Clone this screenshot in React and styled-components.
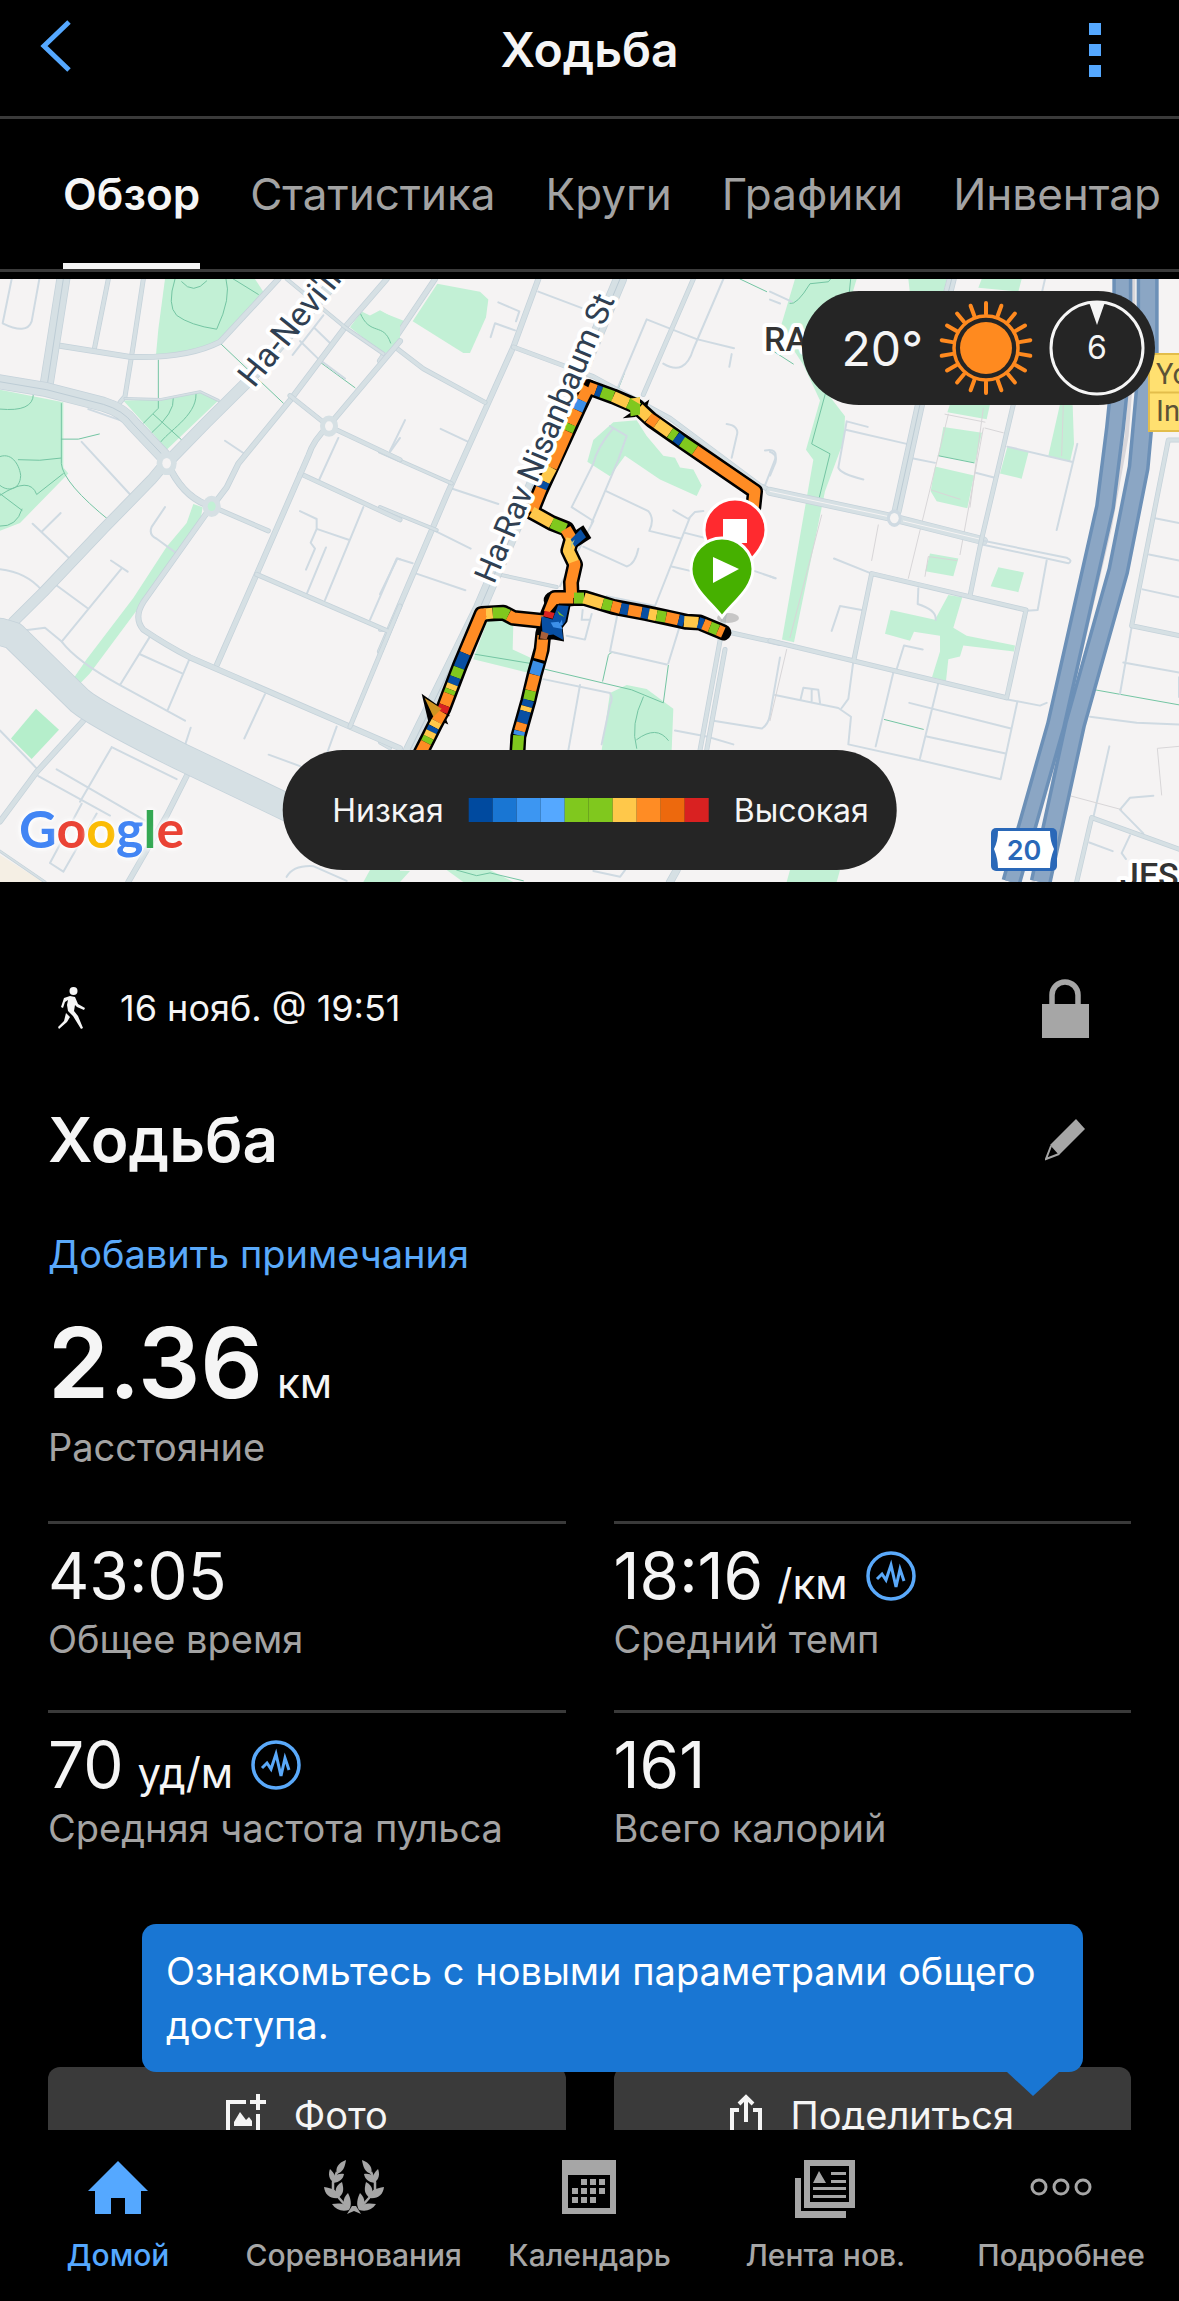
import React from "react";
import styled, { createGlobalStyle } from "styled-components";

const GlobalStyle = createGlobalStyle`
  * {
    box-sizing: border-box;
  }
  body {
    margin: 0;
    background: #000;
    color: #f5f5f5;
    font-family: Inter, "Liberation Sans", sans-serif;
  }
  button {
    font-family: inherit;
    background: none;
    border: none;
    padding: 0;
    color: inherit;
  }
  a {
    text-decoration: none;
  }
  h1, h2, p, dl, dd, dt {
    margin: 0;
  }
`;

const Screen = styled.div`
  display: flex;
  flex-direction: column;
  height: 100vh;
  overflow: hidden;
`;

const Header = styled.header`
  display: grid;
  grid-template-columns: 1fr auto 1fr;
  flex-shrink: 0;
  padding: 20px 40px 36px;
  border-bottom: 3px solid #3a3a3a;
  h1 {
    font-size: 48px;
    font-weight: 600;
    line-height: 60px;
  }
`;

const HeaderButton = styled.button`
  justify-self: ${props => props.$side};
  height: 60px;
  svg {
    display: block;
  }
`;

const Tabs = styled.nav`
  display: flex;
  flex-shrink: 0;
  gap: 50px;
  padding: 0 63px;
  margin-bottom: 7px;
  border-bottom: 3px solid #3a3a3a;
  overflow: hidden;
`;

const Tab = styled.a`
  padding: 45px 0 39px;
  line-height: 60px;
  font-size: 44px;
  white-space: nowrap;
  font-weight: ${props => (props.$active ? 600 : 400)};
  color: ${props => (props.$active ? "#f5f5f5" : "#a3a3a3")};
  border-bottom: 6px solid ${props => (props.$active ? "#f5f5f5" : "transparent")};
`;

const MapPanel = styled.section`
  position: relative;
  flex-shrink: 0;
  height: 603px;
  background: #f5f3f3;
  overflow: hidden;
  > svg {
    display: block;
    width: 100%;
    height: 100%;
  }
`;

const Weather = styled.div`
  position: absolute;
  top: 12px;
  right: 24px;
  display: flex;
  align-items: center;
  gap: 16px;
  height: 114px;
  padding: 0 10px 0 40px;
  border-radius: 57px;
  background: #252525;
  font-size: 48px;
  svg {
    display: block;
  }
`;

const Legend = styled.div`
  position: absolute;
  left: 50%;
  bottom: 12px;
  transform: translateX(-50%);
  display: flex;
  align-items: center;
  gap: 25px;
  height: 120px;
  padding: 0 28px 0 50px;
  border-radius: 60px;
  background: #252525;
  font-size: 32px;
`;

const Scale = styled.div`
  display: flex;
`;

const Swatch = styled.span`
  width: 24px;
  height: 24px;
  background: ${props => props.$color};
`;

const Google = styled.div`
  position: absolute;
  left: 19px;
  bottom: 24px;
  font-family: Lato, sans-serif;
  font-size: 52px;
  font-weight: 700;
  line-height: 60px;
  text-shadow: 0 0 5px #fff, 0 0 5px #fff, 0 0 8px #fff;
`;

const Letter = styled.span`
  color: ${props => props.$color};
`;

const Content = styled.main`
  flex: 1;
  min-height: 0;
  overflow: hidden;
  padding: 96px 48px 0;
`;

const Row = styled.div`
  display: flex;
  align-items: center;
  justify-content: space-between;
  padding-right: 42px;
  h2 {
    font-size: 62px;
    font-weight: 600;
    line-height: 80px;
  }
  & + & {
    margin-top: 62px;
  }
  svg {
    display: block;
  }
`;

const Meta = styled.div`
  display: flex;
  align-items: center;
  gap: 34px;
  padding-left: 10px;
  height: 60px;
  font-size: 36px;
`;

const NotesLink = styled.a`
  display: block;
  margin-top: 49px;
  font-size: 38px;
  line-height: 50px;
  color: #5aa9fa;
`;

const Distance = styled.dl`
  margin-top: 34px;
  dd {
    font-size: 98px;
    font-weight: 600;
    line-height: 100px;
  }
  dt {
    margin-top: 9px;
  }
`;

const Label = styled.dt`
  font-size: 38px;
  line-height: 50px;
  color: #a3a3a3;
`;

const Unit = styled.span`
  margin-left: 14px;
  font-size: 42px;
  font-weight: 400;
  line-height: 40px;
`;

const Stats = styled.dl`
  display: grid;
  grid-template-columns: 1fr 1fr;
  column-gap: 48px;
  margin-top: 49px;
`;

const Stat = styled.div`
  display: flex;
  flex-direction: column-reverse;
  gap: 3px;
  padding: 17px 0 46px;
  border-top: 3px solid #3a3a3a;
  dd {
    display: flex;
    align-items: center;
    font-size: 64px;
    line-height: 70px;
  }
  svg {
    margin-left: 18px;
  }
`;

const Actions = styled.div`
  position: relative;
  display: grid;
  grid-template-columns: 1fr 1fr;
  gap: 48px;
  margin-top: 168px;
`;

const ActionButton = styled.button`
  display: flex;
  align-items: center;
  justify-content: center;
  gap: 28px;
  height: 96px;
  border-radius: 12px;
  background: #3a3a3a;
  font-size: 38px;
`;

const Tooltip = styled.div`
  position: absolute;
  left: 94px;
  right: 48px;
  bottom: calc(100% - 5px);
  padding: 20px 24px;
  border-radius: 14px;
  background: #1976d3;
  color: #fff;
  font-size: 38px;
  line-height: 54px;
  &::after {
    content: "";
    position: absolute;
    top: 100%;
    right: 24px;
    border: solid transparent;
    border-width: 24px 26px 0;
    border-top-color: #1976d3;
  }
`;

const BottomNav = styled.nav`
  display: grid;
  grid-template-columns: repeat(5, 1fr);
  flex-shrink: 0;
  height: 171px;
  padding-top: 24px;
  background: #000;
`;

const NavItem = styled.a`
  display: flex;
  flex-direction: column;
  align-items: center;
  gap: 15px;
  font-size: 30px;
  font-weight: 500;
  line-height: 40px;
  white-space: nowrap;
  color: ${props => (props.$active ? "#55a8ff" : "#a6a6a6")};
`;

const PulseIcon = () => (
  <svg width="50" height="50" viewBox="0 0 50 50" fill="none" stroke="#5aa9fa">
    <circle cx="25" cy="25" r="23" strokeWidth="3.5" />
    <path d="M11 28l5-5 4 6 5-15 5 22 4-18 4 12" strokeWidth="3" />
  </svg>
);

const WalkIcon = () => (
  <svg width="28" height="42" viewBox="0 0 28 42" fill="#f5f5f5">
    <ellipse cx="15.500" cy="4" rx="4" ry="4" />
    <path d="M6 11l6-2 5 1 3 7 7 4-1 2-7-3-2-2-1 6 4 5 5 12-2 1-8-13-5-5-1-6 1-5-3 2-2 6-2-1z" />
    <path d="M8 26l4 4-3 5-8 7-1-2 6-6z" />
  </svg>
);

const SunIcon = () => (
  <svg width="94" height="94" viewBox="-47 -47 94 94">
    <circle r="26" fill="#ff8a1f" />
    <circle r="32" fill="none" stroke="#ff8a1f" strokeWidth="3.500" />
    {Array.from({ length: 18 }, (_, i) => (
      <path
        key={i}
        d="M0 -34V-45"
        stroke="#ff8a1f"
        strokeWidth="4"
        strokeLinecap="round"
        transform={`rotate(${i * 20})`}
      />
    ))}
  </svg>
);

const WindIcon = () => (
  <svg width="96" height="96" viewBox="-48 -48 96 96">
    <circle r="46" fill="none" stroke="#f5f5f5" strokeWidth="3" />
    <path d="M-8 -46H8L0 -23z" fill="#f5f5f5" />
    <text y="11" textAnchor="middle" fontSize="32" fill="#f5f5f5">6</text>
  </svg>
);

const HomeIcon = () => (
  <svg width="60" height="66" viewBox="0 0 60 66" fill="currentColor">
    <path d="M30 7L60 37H53V60H37V44H23V60H7V37H0z" />
  </svg>
);

const LaurelHalf = () => (
  <>
    <path d="M22 0C14 3 11 8 13 14C19 12 21 7 22 0z" />
    <path d="M6 9C4 14 5 19 9 22C13 17 10 13 6 9z" />
    <path d="M20 14C13 13 10 16 9 23C16 22 19 19 20 14z" />
    <path d="M0 27C1 35 6 39 15 38C15 31 8 28 0 27z" />
    <path d="M18 22C11 26 10 31 14 38C20 34 20 29 18 22z" />
    <path d="M8 44C12 50 18 52 25 50C22 43 16 43 8 44z" />
    <path d="M24 33C18 39 18 45 25 50C28 45 27 39 24 33z" />
    <path d="M13 12L9 22V30L15 38L22 46" fill="none" stroke="currentColor" strokeWidth="2.5" />
    <path d="M23 54L28 46H30V51z" />
  </>
);

const LaurelIcon = () => (
  <svg width="60" height="66" viewBox="0 -6 60 66" fill="currentColor">
    <LaurelHalf />
    <g transform="translate(60 0) scale(-1 1)">
      <LaurelHalf />
    </g>
  </svg>
);

const DAYS = [
  [1, 0], [2, 0], [3, 0],
  [0, 1], [1, 1], [2, 1], [3, 1],
  [0, 2], [1, 2], [2, 2]
];

const CalendarIcon = () => (
  <svg width="54" height="66" viewBox="0 0 54 66" fill="currentColor">
    <path fillRule="evenodd" d="M0 6H54V60H0zM6 21V54H48V21z" />
    {DAYS.map(([x, y]) => (
      <rect key={`${x}-${y}`} x={10 + x * 9} y={25 + y * 9} width="6" height="6" />
    ))}
  </svg>
);

const NewsIcon = () => (
  <svg width="60" height="66" viewBox="0 0 60 66" fill="currentColor">
    <path fillRule="evenodd" d="M9 6H60V54H9zM15 12V48H54V12z" />
    <path d="M0 24H6V57H51V64H0zM24 17l7 12H18z" />
    <path d="M36 18H51v3H36zM36 26H51v3H36zM18 33H51v3H18zM18 41H51v3H18z" />
  </svg>
);

const MoreIcon = () => (
  <svg width="62" height="66" viewBox="0 0 62 66" fill="none" stroke="currentColor" strokeWidth="3">
    <circle cx="9" cy="33" r="7" />
    <circle cx="31" cy="33" r="7" />
    <circle cx="53" cy="33" r="7" />
  </svg>
);

const PhotoIcon = () => (
  <svg width="40" height="42" viewBox="0 0 40 42" fill="#f5f5f5">
    <path d="M20 6v4H4V36H30V20h4V40H0V6z" />
    <path d="M30 0h4v6h6v4h-6v6h-4v-6h-6V6h6zM8 32V28l6-10 6 8 3-3 3 4v5z" />
  </svg>
);

const ShareIcon = () => (
  <svg width="32" height="42" viewBox="0 0 32 42" fill="none" stroke="#f5f5f5" strokeWidth="4">
    <path d="M9 16H2V38H30V16H23M16 28V3M9 10l7-7 7 7" />
  </svg>
);

// one square of the street map, drawn in its own units
const Tile = ({ x, children }) => (
  <g
    transform={`translate(${x} 0) scale(.33333 .3954) translate(0 -23)`}
    fill="none"
    strokeLinejoin="round"
  >
    {children}
  </g>
);

const Park = ({ d, fill = "#c2f0d5" }) => <path d={d} fill={fill} />;

const Road = ({ d, w = 2, color = "#cfdae2", cap = "round" }) => (
  <path d={d} stroke={color} strokeWidth={w} strokeLinecap={cap} vectorEffect="non-scaling-stroke" />
);

const Street = ({ d, w = 5 }) => (
  <>
    <Road d={d} w={w} color="#c5d2da" />
    <Road d={d} w={w - 1.5} color="#d6e0e4" />
  </>
);

const Trail = ({ d }) => <Road d={d} w={1} color="#74c5a3" />;

const WestTile = () => (
  <Tile x={0}>
    <Park d="M495 23L475 150L468 215L570 205L660 180L790 55L765 23z" />
    <Park d="M370 330L480 328L600 308L655 330L500 455L455 410z" />
    <Park d="M0 303L190 335V500L205 515L60 640L0 660z" />
    <Park d="M580 592L608 600L600 640L520 735L420 850L270 1020L230 1055L215 1040L260 985L400 830L500 700L560 640z" />
    <Park d="M108 1110L177 1163L95 1237L33 1185z" fill="#b5eecb" />
    <Park d="M1050 145L1085 105L1110 115L1140 102L1200 130V190L1150 212z" />
    <Park d="M0 1480L130 1548H0z" fill="#f5efe4" />
    <Park d="M1110 1518H1200V1548H1090z" />
    <Trail d="M525 23Q500 90 530 115Q570 140 650 150Q695 70 678 23M545 30Q580 65 620 28M700 23L775 62" />
    <Trail d="M660 185L850 337M475 228V350L430 388M520 325Q525 360 455 412M588 315C590 370 500 410 480 438M460 365L545 430M960 233L1065 298" />
    <Trail d="M0 352Q100 360 100 315M184 338V490Q190 540 330 635M184 428H235L298 415M0 472C40 460 60 500 62 520C60 560 20 560 0 545M55 480Q120 485 182 476M0 570Q90 520 110 568L190 515M0 648Q50 650 66 605M0 566L66 608M1080 108C1110 170 1150 130 1172 185" />
    <Road d="M35 23L8 135Q80 165 95 130L118 23M265 352L360 380M245 435L398 575M98 642L215 735M125 662L182 615M0 757Q80 765 125 810M170 798L265 857M185 940L365 755M333 735L383 763M495 600L455 650Q445 670 470 680L530 717" />
    <Road d="M70 912L135 905L185 940Q230 990 360 1050L555 1140M360 1050L448 930M420 972L545 1020M567 987L502 1115M572 1158L550 1215M0 1165L115 1265M335 1207L240 1345M335 1207L530 1288M170 1263L460 1405M115 1280L330 1380M245 1350L150 1500L190 1522L290 1375" />
    <Road d="M675 432L730 463M878 215L970 115M900 180L955 225L1035 275M945 148L990 185M1015 425L958 530M900 610L950 630V655L1048 683M950 655L932 690L945 705L918 758M978 702L920 820M1090 600L975 835M1200 732L1190 730L1110 885M795 1073L733 1185M1010 1155L980 1225M806 1226L900 1255M1200 425L1170 460M860 1535Q880 1505 940 1508L1040 1545" />
    <Street d="M0 1470L135 1548" w={3} />
    <Street d="M325 23L283 200M430 23L400 190L375 320L360 335M1040 0" w={5} />
    <Street d="M180 192L390 220Q560 225 660 182L835 23" w={6} />
    <Street d="M375 325L480 328L600 308L655 330" w={3} />
    <Street d="M190 23L138 300" w={14} />
    <Road d="M190 23L142 290" w={1} color="#bdccd5" />
    <Street d="M0 283L140 303L310 340Q370 355 400 390L490 470" w={15} />
    <Road d="M0 283L140 303L310 340Q370 355 400 390L490 470" w={1} color="#bdccd5" />
    <Street d="M510 480L620 385L740 285L1010 23" w={12} />
    <Street d="M490 495L455 530L310 655L130 815L40 890" w={11} />
    <Street d="M510 500Q560 580 635 598L805 660" w={5} />
    <Street d="M515 510Q560 580 635 598" w={7} />
    <Street d="M635 600L680 550L715 490L870 330L1035 145L1160 23" w={6} />
    <Street d="M860 23L1035 145L1150 212" w={4} />
    <Street d="M870 318L985 395L1200 480M900 515L1200 632" w={5} />
    <Street d="M985 395L1200 180M985 395Q940 430 925 470L770 770L650 1000" w={6} />
    <Street d="M620 615L430 840Q400 880 430 910Q500 950 570 980L1200 1210" w={6} />
    <Street d="M770 770L1160 912M1200 850L1050 1155" w={5} />
    <Street d="M250 1140L110 1270L0 1395M560 1280L500 1380L385 1548" w={6} />
    <Street d="M0 915L40 925L240 1090Q290 1125 540 1230L900 1375" w={28} />
    <circle cx="500" cy="489" r="30" fill="#d6e0e4" />
    <circle cx="500" cy="489" r="13" fill="#f5f3f3" />
    <circle cx="635" cy="598" r="27" fill="#d6e0e4" />
    <circle cx="635" cy="598" r="12" fill="#c2f0d5" />
    <circle cx="987" cy="395" r="27" fill="#d6e0e4" />
    <circle cx="987" cy="395" r="12" fill="#f5f3f3" />
  </Tile>
);

const MiddleTile = () => (
  <Tile x={380}>
    <Park d="M172 35L300 55L325 75L318 120L270 210L250 210L98 130z" />
    <Park d="M0 105L75 130L35 190L0 215z" />
    <Park d="M622 485L640 430L700 385L770 380L800 420L850 470L885 475L900 500L940 505L965 545L950 572L840 530L735 470L690 522z" />
    <Park d="M325 880L400 895L398 960L450 980V1020L280 985z" />
    <Park d="M690 1070L740 1050L800 1060L880 1110L875 1215H665z" />
    <Park d="M0 1518L90 1520L60 1548H0z" />
    <Park d="M200 1518H330L400 1548H250z" />
    <Trail d="M285 972L450 995M495 1010L755 1062L850 1095L865 1000M668 1040L685 975Q690 965 705 968M790 1080Q750 1150 770 1210M770 1188Q830 1150 865 1190M733 262L715 300M1080 23L1160 55" />
    <Trail d="M230 1518L290 1532L330 1525L430 1545M0 155L35 190" />
    <Road d="M75 380L30 458M182 402L265 435M215 553L355 592M165 660L272 705M0 820L52 730L98 742M98 765L256 810M355 82L418 105L408 130M332 170L345 135L405 153M475 55L610 98" />
    <Road d="M715 295L800 125L950 175L1062 198M1030 23L940 200Q915 270 850 237M1055 213L1048 245M690 395L740 420L715 480L635 640M700 400Q650 450 640 490L575 600L640 635M640 635L540 800M610 700L740 750Q765 745 775 705" />
    <Road d="M680 560L805 610Q825 630 808 660L905 680M880 608L925 630L945 612L970 610M930 625L825 850L680 825M915 665L985 680M875 750L950 765M1118 760L1187 780M1040 390Q1080 395 1070 420L1055 475M1155 457Q1195 450 1185 480L1155 545M715 860L690 965L860 998M905 885L865 995" />
    <Road d="M490 1035L690 1070Q700 1085 690 1100L665 1200M600 1050L565 1215M635 870L615 935L560 925M608 860L605 885L630 885M885 1165L980 1180L1060 1200M1000 1140L1145 1160Q1165 1150 1170 1125L1200 980M640 1520L720 1535L735 1518M1200 85L1170 75" />
    <Street d="M165 23L0 230" w={6} />
    <Street d="M475 23L400 195L200 570L0 965" w={6} />
    <Street d="M40 192L130 250L315 335M400 195L560 245L640 270L870 375L1140 545L1200 570" w={5} />
    <Street d="M0 460L215 540M0 600L170 658M0 910L15 910M0 1195L30 1210M355 770L530 802" w={4} />
    <Street d="M940 23L790 315M1040 915L1200 945" w={5} />
    <Street d="M720 23L560 345L300 855L90 1215" w={14} />
    <Road d="M720 23L560 345L300 855L90 1215" w={1} color="#bccbd4" />
    <Street d="M1060 720L1025 915L960 1215M1035 960L980 1215" w={5} />
    <Street d="M890 1518L870 1548" w={8} />
  </Tile>
);

const EastTile = () => (
  <Tile x={770}>
    <Park d="M75 23H260L240 80L170 310L225 370L222 430L165 560L72 942L36 935L130 480L108 455L150 330L100 240L30 150z" />
    <Park d="M415 23H530L520 60H420zM635 23H755L745 55L625 45z" />
    <Park d="M540 340L660 340L650 378L532 360zM520 397L636 412L615 488L505 470zM495 497L612 520L592 603L500 585L482 560zM712 447L776 460L755 528L690 515z" />
    <Park d="M870 340L908 342L912 440L900 485L835 470z" />
    <Park d="M480 717L565 730L550 775L466 762zM685 752L762 765L745 815L662 800z" />
    <Park d="M362 860L495 885L535 822L577 828L550 905L590 925L735 950L732 965L580 950L570 978L535 985L528 1040L486 1030L510 965V925L432 915L420 938L345 920z" />
    <Park d="M60 1518H210L200 1548H50z" />
    <Trail d="M60 85Q80 90 120 35L175 30L182 23M242 23L235 80M180 270L125 440L180 465L148 575M505 470L612 488M975 1062L1227 1100M343 1137L460 1162M905 1240L870 1440M1105 560L1030 860M0 200L70 238" />
    <Road d="M0 55L65 80M293 397L230 383L205 500Q210 515 280 530M230 405L410 440M430 477L495 488M617 513L672 525M712 447L905 485M922 440L860 658M0 460Q30 470 10 500L0 520M0 775L15 780M192 730L305 768M185 913L210 850L275 860" />
    <Road d="M445 805L443 845Q500 860 497 885M380 1010L402 950L458 960M830 735L803 860L770 862M92 1085L100 1057L145 1062L150 1095M125 1062V1090M15 1075L205 1108L243 1130L235 1200L450 1240L692 1288L742 1092M235 1085L215 1108M250 990L235 1085M370 1018L317 1205M505 1045L450 1235M418 1095L723 1160M470 1180L707 1223M705 1085L810 1102L830 1095" />
    <Road d="M825 23L815 60M1155 628L1227 640M1137 720L1227 735M1118 808L1227 828M1085 903L1050 1072M1060 993L1227 1018M960 1130L1100 1145L1227 1150M1018 1205L970 1385M1150 1330L1080 1335L1050 1365L1120 1425M1080 1430L1055 1475L1068 1490M958 1448L1028 1470M1227 1080V1030" />
    <Road d="M525 365L645 385M645 400L700 412M535 365L415 780M640 400L570 720M485 557L570 580M325 645L305 735M465 775L475 725L560 735M155 620L60 930M50 960L0 1140M640 350L600 600M880 340L875 470M900 1330L1055 1365M1175 1328L1162 1210L1227 1205" w={1} color="#d8d6d8" />
    <Street d="M545 23L450 340L380 610" w={10} />
    <Road d="M545 23L450 340L380 610" w={1} color="#bccbd4" />
    <Street d="M0 560L370 627L640 685" w={9} />
    <Road d="M0 560L350 623M400 635L640 683" w={1} color="#f5f3f3" />
    <Road d="M640 685L890 728Q910 735 895 742L640 695" w={2} />
    <Street d="M730 340L635 680L600 825M0 938L710 1082L768 860L305 768L252 985" w={5} />
    <Street d="M1227 430L1195 430L1085 900L1227 925M1227 1465L965 1385L920 1548" w={5} />
    <circle cx="373" cy="628" r="22" fill="#cfdae2" />
    <circle cx="373" cy="628" r="13" fill="#f5f3f3" />
    <Road d="M1090 23V200L1070 420L1020 650L900 1080L790 1548" w={4} color="#d8d6da" cap="butt" />
    <Road d="M1057 23V220L1035 400L1005 600L858 1150L724 1548" w={20} color="#6c90b7" cap="butt" />
    <Road d="M1057 23V220L1035 400L1005 600L858 1150L724 1548" w={13} color="#8ba6c4" cap="butt" />
    <Road d="M1133 23V250L1106 500L1045 760L915 1150L812 1548" w={22} color="#6c90b7" cap="butt" />
    <Road d="M1133 23V250L1106 500L1045 760L915 1150L812 1548" w={15} color="#8ba6c4" cap="butt" />
  </Tile>
);

const BLUE = "#084fa3";
const SKY = "#3c8fe8";
const GREEN = "#80c81e";
const YELLOW = "#ffc84a";
const ORANGE = "#ff8c24";
const RED = "#d92121";

const ROUTE = [
  "M625 297L595 350L480 560L455 612",
  "M625 297L700 320L770 345L815 380L900 430L1125 560L1120 600",
  "M455 612L515 640L560 655L575 680L565 710L585 745L573 790L575 830",
  "M515 835L580 830L615 830L700 852L800 868L920 890L960 892L1030 917",
  "M510 890L400 880L370 867L305 870L240 1000L190 1110L165 1150L120 1225",
  "M575 830L525 830L505 870L490 920L485 960L465 1020L445 1090L425 1150L415 1180L412 1225"
];

const ROUTE_COLORS = [
  [ORANGE, "M625 297L605 330"],
  [SKY, "M605 330L592 355"],
  [ORANGE, "M592 355L572 390"],
  [GREEN, "M572 390L563 408"],
  [ORANGE, "M563 408L515 500"],
  [YELLOW, "M515 500L493 535"],
  [BLUE, "M493 535L484 552"],
  [ORANGE, "M484 552L455 612"],
  [ORANGE, "M625 297L648 304"],
  [BLUE, "M648 304L664 309"],
  [GREEN, "M664 309L700 320"],
  [YELLOW, "M700 320L745 337"],
  [GREEN, "M745 337L776 350"],
  [YELLOW, "M776 350L806 374"],
  [ORANGE, "M806 374L830 388"],
  [YELLOW, "M830 388L870 412"],
  [GREEN, "M870 412L888 422"],
  [BLUE, "M888 422L906 434"],
  [GREEN, "M906 434L945 456"],
  [ORANGE, "M945 456L1125 560L1120 600"],
  [YELLOW, "M455 612L515 640"],
  [GREEN, "M515 640L557 655"],
  [ORANGE, "M557 655L575 680"],
  [YELLOW, "M575 680L565 710L585 745"],
  [ORANGE, "M582 738L585 745L573 790L575 830"],
  [GREEN, "M582 830L612 830"],
  [YELLOW, "M612 830L668 844"],
  [GREEN, "M668 844L695 850"],
  [ORANGE, "M695 850L722 856"],
  [BLUE, "M722 856L745 860"],
  [ORANGE, "M745 860L785 866"],
  [BLUE, "M785 866L806 870"],
  [YELLOW, "M806 870L830 874"],
  [GREEN, "M830 874L858 878"],
  [ORANGE, "M858 878L896 885"],
  [BLUE, "M896 885L912 889"],
  [YELLOW, "M912 889L955 892"],
  [BLUE, "M955 892L970 896"],
  [ORANGE, "M970 896L990 903"],
  [GREEN, "M990 903L1014 911"],
  [ORANGE, "M1014 911L1030 917"],
  [ORANGE, "M490 888L400 880L385 873"],
  [GREEN, "M385 873L370 867L338 868"],
  [YELLOW, "M338 868L312 870"],
  [ORANGE, "M318 870L305 870L255 970"],
  [BLUE, "M255 970L237 1006"],
  [GREEN, "M237 1006L226 1030"],
  [BLUE, "M226 1030L218 1048"],
  [YELLOW, "M218 1048L212 1061"],
  [GREEN, "M212 1061L207 1072"],
  [ORANGE, "M207 1072L194 1101"],
  [RED, "M194 1101L186 1118"],
  [ORANGE, "M186 1118L170 1142"],
  [YELLOW, "M170 1142L161 1156"],
  [BLUE, "M161 1156L154 1168"],
  [YELLOW, "M154 1168L146 1182"],
  [GREEN, "M146 1182L138 1195"],
  [ORANGE, "M138 1195L120 1225"],
  [ORANGE, "M580 830L525 830L507 868"],
  [ORANGE, "M489 925L485 960L478 985"],
  [SKY, "M475 992L464 1024"],
  [ORANGE, "M464 1024L452 1064"],
  [GREEN, "M452 1064L446 1088"],
  [BLUE, "M446 1088L440 1104"],
  [YELLOW, "M440 1104L436 1116"],
  [BLUE, "M436 1116L426 1146"],
  [ORANGE, "M426 1146L419 1166"],
  [SKY, "M419 1166L416 1177"],
  [GREEN, "M416 1177L412 1225"]
];

// overlapping laps where the walk crosses itself
const Crossing = () => (
  <>
    <path d="M530 845L572 847L562 890L548 905L552 940L520 935L475 935L484 880L505 870z" fill="#000" />
    <path d="M494 862L524 868L518 882L490 876z" fill={RED} />
    <path d="M484 876L518 884L534 848L566 850L556 890L545 902L550 936L520 922L488 926z" fill={BLUE} />
    <path d="M532 862L554 878L538 872z" fill={GREEN} />
    <path d="M512 892L536 890L548 908L520 904zM535 900L546 884L548 898z" fill={SKY} />
    <path d="M484 914L506 920L500 934L480 932z" fill="#a8603a" />
    <path d="M572 682L602 656L618 676L584 700z" fill={BLUE} />
    <path d="M574 690L584 682L572 708z" fill="#b8c98a" />
  </>
);

const Route = () => (
  <Tile x={380}>
    <path d="M125 1072L180 1105L210 1128L195 1130L205 1150L180 1140L150 1160z" fill="#000" />
    <path d="M728 375L808 328L800 350L765 372z" fill="#000" />
    <path d="M570 668L610 646L634 678L590 702z" fill="#000" />
    {ROUTE.map(d => (
      <Road key={d} d={d} w={16} color="#000" />
    ))}
    {ROUTE_COLORS.map(([color, d]) => (
      <Road key={d} d={d} w={11} color={color} cap="butt" />
    ))}
    <Crossing />
    <path d="M134 1083L185 1110L160 1130z" fill="#cf9420" />
    <path d="M748 326L780 322L780 366L752 370z" fill={GREEN} />
    <path d="M752 326L780 322L780 340z" fill={YELLOW} />
  </Tile>
);

const MapLabel = ({ transform, size = 32, weight = 400, color = "#2f3f52", children }) => (
  <text
    transform={transform}
    fontFamily="Roboto, sans-serif"
    fontSize={size}
    fontWeight={weight}
    fill={color}
    stroke="#fff"
    strokeWidth="8"
    strokeLinejoin="round"
    paintOrder="stroke"
  >
    {children}
  </text>
);

const Pin = ({ x, y, color, children }) => (
  <g transform={`translate(${x} ${y})`}>
    <path
      d="M0 48C-10 34 -31 20 -31 0A31 31 0 0 1 31 0C31 20 10 34 0 48z"
      fill={color}
      stroke="#fff"
      strokeWidth="3"
    />
    {children}
  </g>
);

const StreetMap = () => (
  <svg viewBox="0 0 1179 603" preserveAspectRatio="xMidYMid slice" role="img" aria-label="Карта">
    <MiddleTile />
    <WestTile />
    <EastTile />
    <Route />
    <MapLabel transform="translate(254 110) rotate(-51)" size={34}>Ha-Nevi'im</MapLabel>
    <MapLabel transform="translate(494 306) rotate(-67)">Ha-Rav Nisanbaum St</MapLabel>
    <MapLabel transform="translate(764 72)" size={34} weight={500} color="#333">RA</MapLabel>
    <MapLabel transform="translate(1120 608)" size={34} weight={500} color="#333">JES</MapLabel>
    <g fontFamily="Roboto, sans-serif" fontSize="29" fill="#5c5336">
      <path d="M1149 75H1190V152H1149zM1149 113.500H1190" fill="#ffe070" stroke="#e3bd4b" strokeWidth="2" />
      <text x="1156" y="105">Yo</text>
      <text x="1156" y="142">Int</text>
    </g>
    <rect x="991" y="549" width="66" height="43" rx="5" fill="#2a68b8" />
    <path d="M998 552H1050Q1050 562 1054 570Q1050 580 1050 589H998Q998 580 994 570Q998 562 998 552z" fill="#fff" />
    <text x="1024" y="581" textAnchor="middle" fontSize="27" fontWeight="600" fill="#2a68b8">20</text>
    <ellipse cx="728" cy="339" rx="11" ry="5" fill="#999" opacity=".5" />
    <Pin x={735} y={251} color="#ff2a2f">
      <path d="M-12 -11H12V13H-12z" fill="#fff" />
    </Pin>
    <Pin x={722} y={290} color="#46b000">
      <path d="M-9 -12L17 0L-9 14z" fill="#fff" />
    </Pin>
  </svg>
);

const TABS = ["Обзор", "Статистика", "Круги", "Графики", "Инвентар"];

const SCALE = [
  "#004a9f", "#1976d3", "#3c96f2", "#55a8ff", "#80c81e",
  "#80c81e", "#ffc84a", "#ff8c24", "#ed690d", "#d92121"
];

const LOGO = [
  ["G", "#4285f4"],
  ["o", "#ea4335"],
  ["o", "#fbbc05"],
  ["g", "#4285f4"],
  ["l", "#34a853"],
  ["e", "#ea4335"]
];

const STATS = [
  { value: "43:05", label: "Общее время" },
  { value: "18:16", unit: "/км", label: "Средний темп", pulse: true },
  { value: "70", unit: "уд/м", label: "Средняя частота пульса", pulse: true },
  { value: "161", label: "Всего калорий" }
];

const NAV = [
  { label: "Домой", icon: HomeIcon, active: true },
  { label: "Соревнования", icon: LaurelIcon },
  { label: "Календарь", icon: CalendarIcon },
  { label: "Лента нов.", icon: NewsIcon },
  { label: "Подробнее", icon: MoreIcon }
];

export default function App() {
  return (
    <Screen>
      <GlobalStyle />
      <Header>
        <HeaderButton $side="start" aria-label="Назад">
          <svg width="32" height="60" viewBox="0 0 32 60" fill="none" stroke="#55a8ff" strokeWidth="5">
            <path d="M29 2L4 26L29 50" />
          </svg>
        </HeaderButton>
        <h1>Ходьба</h1>
        <HeaderButton $side="end" aria-label="Меню">
          <svg width="50" height="60" viewBox="0 0 50 60" fill="#55a8ff">
            <path d="M0 3h12v12H0zM0 24h12v12H0zM0 45h12v12H0z" />
          </svg>
        </HeaderButton>
      </Header>

      <Tabs>
        {TABS.map((tab, i) => (
          <Tab key={tab} href="#" $active={i === 0}>{tab}</Tab>
        ))}
      </Tabs>

      <MapPanel>
        <StreetMap />
        <Google>
          {LOGO.map(([char, color], i) => (
            <Letter key={i} $color={color}>{char}</Letter>
          ))}
        </Google>
        <Weather>
          20°
          <SunIcon />
          <WindIcon />
        </Weather>
        <Legend>
          Низкая
          <Scale>
            {SCALE.map((color, i) => (
              <Swatch key={i} $color={color} />
            ))}
          </Scale>
          Высокая
        </Legend>
      </MapPanel>

      <Content>
        <Row>
          <Meta>
            <WalkIcon />
            16 нояб. @ 19:51
          </Meta>
          <button aria-label="Конфиденциальность">
            <svg width="48" height="60" viewBox="0 0 48 60">
              <path d="M11 28V17a13 13 0 0 1 26 0V28" fill="none" stroke="#a6a6a6" strokeWidth="5.500" />
              <path d="M1 26H48V60H1z" fill="#a6a6a6" />
            </svg>
          </button>
        </Row>
        <Row>
          <h2>Ходьба</h2>
          <button aria-label="Изменить">
            <svg width="44" height="42" viewBox="0 0 44 42">
              <path d="M31 0L40 10L14 36L5 26z" fill="#a6a6a6" />
              <path d="M6 27L1 40L14 35" fill="none" stroke="#a6a6a6" strokeWidth="2" />
            </svg>
          </button>
        </Row>
        <NotesLink href="#">Добавить примечания</NotesLink>

        <Distance>
          <dd>2.36<Unit>км</Unit></dd>
          <Label>Расстояние</Label>
        </Distance>

        <Stats>
          {STATS.map(stat => (
            <Stat key={stat.label}>
              <Label>{stat.label}</Label>
              <dd>
                <span>
                  {stat.value}
                  {stat.unit && <Unit>{stat.unit}</Unit>}
                </span>
                {stat.pulse && <PulseIcon />}
              </dd>
            </Stat>
          ))}
        </Stats>

        <Actions>
          <ActionButton>
            <PhotoIcon />
            Фото
          </ActionButton>
          <ActionButton>
            <ShareIcon />
            Поделиться
          </ActionButton>
          <Tooltip role="tooltip">Ознакомьтесь с новыми параметрами общего доступа.</Tooltip>
        </Actions>
      </Content>

      <BottomNav>
        {NAV.map(item => (
          <NavItem key={item.label} href="#" $active={item.active}>
            <item.icon />
            {item.label}
          </NavItem>
        ))}
      </BottomNav>
    </Screen>
  );
}
